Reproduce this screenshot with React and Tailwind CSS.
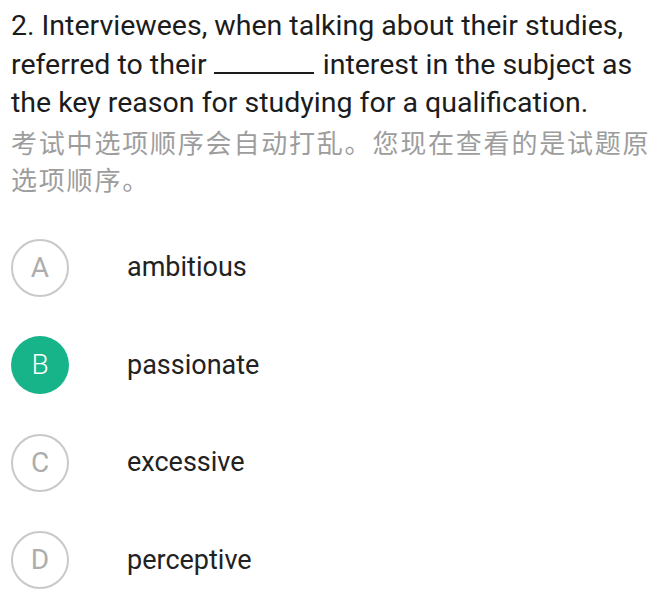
import React from 'react';

const options = [
  { key: 'A', text: 'ambitious' },
  { key: 'B', text: 'passionate', selected: true },
  { key: 'C', text: 'excessive' },
  { key: 'D', text: 'perceptive' },
];

function OptionRow({ option }) {
  return (
    <div className="flex items-center h-[58px]">
      <div
        className={`w-[58px] h-[58px] rounded-full flex items-center justify-center text-[28px] shrink-0 ${
          option.selected
            ? 'bg-[#17b389] text-white font-light'
            : 'border-2 border-[#c9c9c9] text-[#adadad]'
        }`}
      >
        {option.key}
      </div>
      <span className="ml-[58px] text-[27px] text-[#222]">{option.text}</span>
    </div>
  );
}

export default function App() {
  return (
    <div className="bg-white w-[653px] h-[613px] pl-[11px] pt-[7px] font-['Roboto','Noto_Sans_CJK_SC',sans-serif]">
      <p className="text-[28.5px] leading-[38.5px] text-[#1c1c1c]">
        2. Interviewees, when talking about their studies, referred to their{' '}
        <span className="inline-block w-[100px] h-[2px] mr-[2px] bg-[#1c1c1c] align-baseline"></span> interest in the
        subject as the key reason for studying for a qualification.
      </p>
      <p className="text-[26px] leading-[37px] tracking-[1.8px] text-[#9d9d9d] font-['Noto_Sans_CJK_SC',sans-serif]">
        考试中选项顺序会自动打乱。您现在查看的是试题原选项顺序。
      </p>
      <div className="mt-[42px] flex flex-col gap-[39.5px]">
        {options.map((o) => (
          <OptionRow key={o.key} option={o} />
        ))}
      </div>
    </div>
  );
}
